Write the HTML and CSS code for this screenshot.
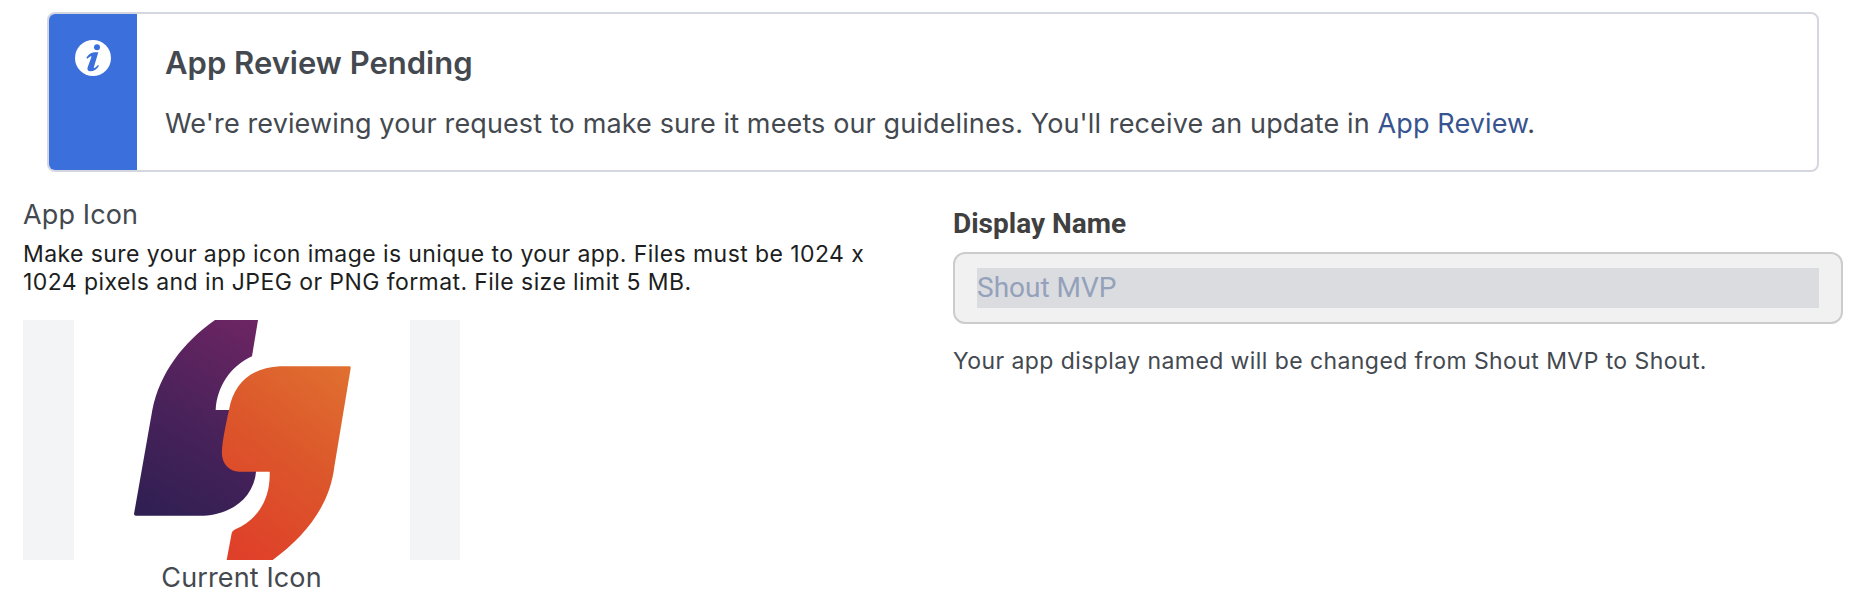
FILE: index.html
```html
<!DOCTYPE html>
<html lang="en">
<head>
<meta charset="utf-8">
<title>App Review</title>
<link rel="stylesheet" href="styles.css">
</head>
<body>
<main class="page">
  <section class="notice">
    <div class="notice-rail">
      <svg class="notice-icon" viewBox="0 0 108 108" aria-hidden="true">
        <circle cx="54" cy="54" r="54" fill="#fff"/>
        <circle cx="66" cy="22" r="9" fill="#3a6fdc"/>
        <path d="M34 53C40 43 49 38 58 37H70L57 80C55 87 60 85 69 75L72 77C66 88 55 94 46 94C38 94 36 89 38 82L49 52C51 46 45 48 37 56Z" fill="#3a6fdc"/>
      </svg>
    </div>
    <div class="notice-body">
      <h1 class="notice-title">App Review Pending</h1>
      <p class="notice-text">We're reviewing your request to make sure it meets our guidelines. You'll receive an update in <a class="link">App Review</a>.</p>
    </div>
  </section>
  <div class="columns">
    <section class="icon-panel">
      <h2 class="panel-label">App Icon</h2>
      <p class="panel-hint">Make sure your app icon image is unique to your app. Files must be 1024 x<br>1024 pixels and in JPEG or PNG format. File size limit 5 MB.</p>
      <figure class="preview">
        <svg class="preview-art" viewBox="69 60 1311 720" aria-hidden="true">
          <defs>
            <linearGradient id="plum" gradientUnits="userSpaceOnUse" x1="760" y1="60" x2="440" y2="640">
              <stop offset="0" stop-color="#6d2563"/>
              <stop offset=".55" stop-color="#48225a"/>
              <stop offset="1" stop-color="#301f52"/>
            </linearGradient>
            <linearGradient id="ember" gradientUnits="userSpaceOnUse" x1="1050" y1="200" x2="670" y2="720">
              <stop offset="0" stop-color="#e07030"/>
              <stop offset=".5" stop-color="#dc562b"/>
              <stop offset="1" stop-color="#df4029"/>
            </linearGradient>
          </defs>
          <rect x="69" y="60" width="1311" height="720" fill="#f3f4f6"/>
          <rect x="222" y="60" width="1008" height="720" fill="#fff"/>
          <path d="M645 60C550 126 479 219 457 330L402 642Q402 647 408 647H610C700 643 762 588 768 515L740 330H647C651 260 690 200 756 169L774 60Z" fill="url(#plum)"/>
          <path d="M840 199H1048Q1053 199 1052 205L1003 500C989 617 917 707 818 780H680L695 700Q696 693 706 688C771 660 812 600 809 515H718C685 515 662 488 666 448Q668 415 687 330C701 250 754 203 840 199Z" fill="url(#ember)"/>
        </svg>
        <figcaption class="preview-caption">Current Icon</figcaption>
      </figure>
    </section>
    <section class="name-panel">
      <h2 class="name-label">Display Name</h2>
      <div class="field"><span class="field-value">Shout MVP</span></div>
      <p class="name-hint">Your app display named will be changed from Shout MVP to Shout.</p>
    </section>
  </div>
</main>
</body>
</html>
```

FILE: styles.css
```css
* { box-sizing: border-box; }
body {
  margin: 0;
  background: #fff;
  color: #444950;
  font-family: Inter, "Liberation Sans", sans-serif;
}
h1, h2, p, figure { margin: 0; }
.page { padding-top: 12px; }
.notice {
  display: flex;
  width: 1772px;
  height: 160px;
  margin-left: 47px;
  border: 2px solid #d4d7df;
  border-radius: 8px;
  overflow: hidden;
}
.notice-rail {
  flex: 0 0 88px;
  display: flex;
  justify-content: center;
  align-items: flex-start;
  padding-top: 26px;
  background: #3a6fdc;
}
.notice-icon { width: 36px; height: 36px; }
.notice-body { padding: 29px 0 0 28px; white-space: nowrap; }
.notice-title {
  font-size: 31px;
  font-weight: 600;
  line-height: 40px;
}
.notice-text {
  margin-top: 23px;
  font-size: 27px;
  line-height: 36px;
  letter-spacing: .125px;
}
.link { color: #385490; }
.columns { display: flex; }
.icon-panel { width: 930px; padding: 25px 0 0 23px; }
.panel-label {
  font-size: 27px;
  font-weight: 400;
  line-height: 36px;
  letter-spacing: .125px;
}
.panel-hint {
  margin-top: 7px;
  color: #1c1e21;
  font-size: 23px;
  line-height: 28px;
  letter-spacing: .42px;
  white-space: nowrap;
}
.preview { width: 437px; margin-top: 24px; }
.preview-art { display: block; width: 437px; height: 240px; }
.preview-caption {
  font-size: 27px;
  line-height: 36px;
  letter-spacing: .125px;
  text-align: center;
}
.name-panel { width: 890px; margin-left: 23px; padding-top: 34px; }
.name-label {
  color: #404040;
  font: 700 28px/36px Roboto, sans-serif;
}
.field {
  height: 72px;
  margin-top: 10px;
  padding: 14px 22px;
  border: 2px solid #ccc;
  border-radius: 12px;
  background: #f1f1f1;
}
.field-value {
  display: block;
  height: 40px;
  background: #dbdce0;
  color: #94a1ba;
  font: 400 28px/40px Roboto, sans-serif;
}
.name-hint {
  margin-top: 21px;
  font-size: 23px;
  line-height: 32px;
  letter-spacing: .42px;
  white-space: nowrap;
}
```
